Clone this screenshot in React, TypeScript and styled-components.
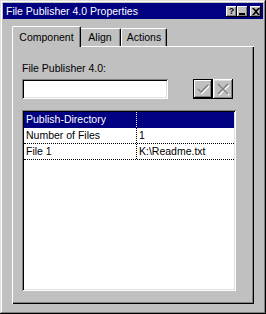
import React from 'react';
import styled, { createGlobalStyle } from 'styled-components';

const Global = createGlobalStyle`
  html, body { margin: 0; padding: 0; background: #c0c0c0; }
  body { font-family: "Liberation Sans", Arial, sans-serif; font-size: 10.5px; color: #000; }
  * { box-sizing: border-box; }
`;

const Window = styled.div`
  width: 266px;
  height: 314px;
  background: #c0c0c0;
  padding: 3px;
  display: flex;
  flex-direction: column;
  box-shadow: inset -1px -1px #000, inset 1px 1px #dfdfdf, inset -2px -2px #808080, inset 2px 2px #fff;
`;

const TitleBar = styled.div`
  height: 16px;
  background: #000080;
  color: #fff;
  display: flex;
  align-items: center;
  justify-content: space-between;
  padding: 0 2px 0 3px;
`;

const TitleText = styled.span`
  font-size: 10.5px;
  line-height: 16px;
  white-space: nowrap;
`;

const CaptionButtons = styled.div`
  display: flex;
  align-items: center;
`;

const CaptionButton = styled.div<{ $gap?: number }>`
  width: 11px;
  height: 11px;
  margin-left: ${(p) => p.$gap ?? 0}px;
  background: #c0c0c0;
  color: #000;
  display: flex;
  align-items: center;
  justify-content: center;
  font-weight: bold;
  font-size: 9px;
  line-height: 9px;
  box-shadow: inset -1px -1px #000, inset 1px 1px #fff, inset -2px -2px #808080;
`;

const Body = styled.div`
  flex: 1;
  display: flex;
  flex-direction: column;
  padding: 7px 9px 7px 9px;
`;

const TabStrip = styled.div`
  display: flex;
  align-items: flex-end;
  padding-left: 2px;
  height: 21px;
  margin-bottom: -1px;
  position: relative;
  z-index: 1;
`;

const Tab = styled.div<{ $active?: boolean; $w: number }>`
  width: ${(p) => p.$w + (p.$active ? 4 : 0)}px;
  height: ${(p) => (p.$active ? 21 : 18)}px;
  margin: ${(p) => (p.$active ? '0 -2px' : '0 0 1px 0')};
  position: relative;
  z-index: ${(p) => (p.$active ? 2 : 1)};
  background: #c0c0c0;
  border-top: 1px solid #fff;
  border-left: 1px solid #fff;
  border-right: 1px solid #000;
  border-radius: 2px 2px 0 0;
  box-shadow: inset -1px 0 #808080;
  display: flex;
  justify-content: center;
  padding-top: ${(p) => (p.$active ? 4 : 2)}px;
  font-size: 10.5px;
  line-height: 13px;
  white-space: nowrap;
`;

const Panel = styled.div`
  flex: 1;
  background: #c0c0c0;
  box-shadow: inset 1px 1px #fff, inset -1px -1px #000, inset -2px -2px #808080;
  display: flex;
  flex-direction: column;
  padding: 16px 18px 13px 10px;
`;

const Label = styled.div`
  line-height: 13px;
  height: 13px;
  margin-bottom: 4px;
  white-space: nowrap;
`;

const InputRow = styled.div`
  display: flex;
  align-items: center;
  height: 20px;
  margin-bottom: 11px;
`;

const TextInput = styled.div`
  width: 146px;
  height: 20px;
  background: #fff;
  box-shadow: inset 1px 1px #808080, inset -1px -1px #fff, inset 2px 2px #000, inset -2px -2px #dfdfdf;
`;

const IconButton = styled.div<{ $default?: boolean }>`
  width: 20px;
  height: 20px;
  background: #c0c0c0;
  display: flex;
  align-items: center;
  justify-content: center;
  margin-left: ${(p) => (p.$default ? 25 : 0)}px;
  box-shadow: ${(p) =>
    p.$default
      ? 'inset 0 0 0 1px #000, inset -2px -2px #000, inset 2px 2px #fff, inset -3px -3px #808080'
      : 'inset -1px -1px #000, inset 1px 1px #fff, inset -2px -2px #808080, inset 2px 2px #dfdfdf'};
`;

const List = styled.div`
  flex: 1;
  background: #fff;
  padding: 2px;
  box-shadow: inset 1px 1px #808080, inset -1px -1px #fff, inset 2px 2px #000, inset -2px -2px #dfdfdf;
`;

const Row = styled.div<{ $selected?: boolean }>`
  display: grid;
  grid-template-columns: 113px 1fr;
  height: 16px;
  background: ${(p) => (p.$selected ? '#000080' : '#fff')};
  color: ${(p) => (p.$selected ? '#fff' : '#000')};
  border-bottom: 1px dotted ${(p) => (p.$selected ? '#000080' : '#000')};
`;

const Cell = styled.div<{ $first?: boolean; $selected?: boolean }>`
  padding-left: ${(p) => (p.$first ? 2 : 2)}px;
  line-height: 15px;
  white-space: nowrap;
  overflow: hidden;
  border-right: ${(p) => (p.$first ? `1px dotted ${p.$selected ? '#fff' : '#000'}` : 'none')};
`;

const CheckIcon = () => (
  <svg width="14" height="12" viewBox="0 0 14 12">
    <path d="M2 6 L5 9 L12 2" stroke="#fff" strokeWidth="1.6" fill="none" transform="translate(1,1)" />
    <path d="M2 6 L5 9 L12 2" stroke="#808080" strokeWidth="1.6" fill="none" />
  </svg>
);

const CrossIcon = () => (
  <svg width="14" height="14" viewBox="0 0 14 14">
    <path d="M2 2 L12 12 M12 2 L2 12" stroke="#fff" strokeWidth="1.6" fill="none" transform="translate(1,1)" />
    <path d="M2 2 L12 12 M12 2 L2 12" stroke="#808080" strokeWidth="1.6" fill="none" />
  </svg>
);

const MinIcon = () => (
  <svg width="7" height="7" viewBox="0 0 7 7">
    <rect x="0" y="5" width="6" height="2" fill="#000" />
  </svg>
);

const CloseIcon = () => (
  <svg width="8" height="7" viewBox="0 0 8 7">
    <path d="M0 0h2l2 2 2-2h2L5 3.5 8 7H6L4 5 2 7H0l3-3.5z" fill="#000" />
  </svg>
);

const rows = [
  { k: 'Publish-Directory', v: '', sel: true },
  { k: 'Number of Files', v: '1' },
  { k: 'File 1', v: 'K:\\Readme.txt' },
];

export default function App() {
  return (
    <>
      <Global />
      <Window>
        <TitleBar>
          <TitleText>File Publisher 4.0 Properties</TitleText>
          <CaptionButtons>
            <CaptionButton>?</CaptionButton>
            <CaptionButton><MinIcon /></CaptionButton>
            <CaptionButton $gap={2}><CloseIcon /></CaptionButton>
          </CaptionButtons>
        </TitleBar>
        <Body>
          <TabStrip>
            <Tab $active $w={65}>Component</Tab>
            <Tab $w={42}>Align</Tab>
            <Tab $w={46}>Actions</Tab>
          </TabStrip>
          <Panel>
            <Label>File Publisher 4.0:</Label>
            <InputRow>
              <TextInput />
              <IconButton $default><CheckIcon /></IconButton>
              <IconButton><CrossIcon /></IconButton>
            </InputRow>
            <List>
              {rows.map((r) => (
                <Row key={r.k} $selected={r.sel}>
                  <Cell $first $selected={r.sel}>{r.k}</Cell>
                  <Cell>{r.v}</Cell>
                </Row>
              ))}
            </List>
          </Panel>
        </Body>
      </Window>
    </>
  );
}
